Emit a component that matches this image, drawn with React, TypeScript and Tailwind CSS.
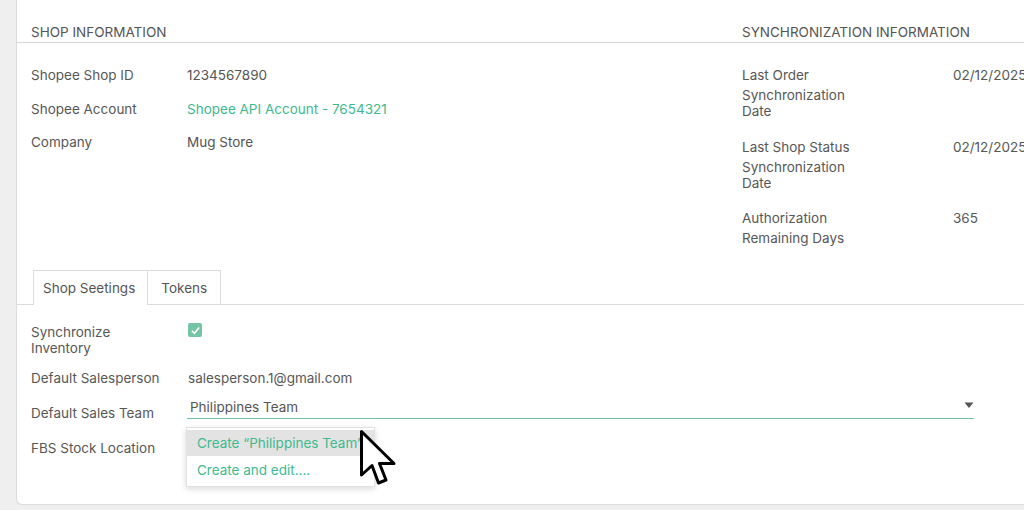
const font = { fontFamily: 'Inter, "Noto Sans", sans-serif' };

interface InfoRow {
  label: string;
  rest?: string;
  value: string;
  link?: boolean;
}

const shopRows: InfoRow[] = [
  { label: 'Shopee Shop ID', value: '1234567890' },
  { label: 'Shopee Account', value: 'Shopee API Account - 7654321', link: true },
  { label: 'Company', value: 'Mug Store' },
];

const syncRows: InfoRow[] = [
  { label: 'Last Order', rest: 'Synchronization\nDate', value: '02/12/2025 10:00:00' },
  { label: 'Last Shop Status', rest: 'Synchronization\nDate', value: '02/12/2025 10:00:00' },
  { label: 'Authorization', rest: 'Remaining Days', value: '365' },
];

function Cursor() {
  return (
    <svg
      className="absolute left-[358px] top-[429px]"
      width="38"
      height="58"
      viewBox="0 0 38 58"
    >
      <path
        d="M2.5 2.5 L2.5 46 L13 36.5 L19.5 54 L27 51 L20.5 34.5 L35 34.5 Z"
        fill="white"
        stroke="black"
        strokeWidth="3"
        strokeLinejoin="round"
      />
    </svg>
  );
}

export default function App() {
  return (
    <div className="w-[1024px] h-[510px] overflow-hidden bg-[#efefef] text-[13.5px] text-[#575757]" style={font}>
      <div className="relative ml-[16px] w-[1100px] h-[505px] bg-white border-l border-b border-[#dcdcdc] rounded-bl-[6px]">
        {/* header row */}
        <div className="flex h-[43px] border-b border-[#d6d6d6] uppercase text-[#555]">
          <div className="w-[725px] pl-[14px] flex items-end pb-0 leading-5">Shop Information</div>
          <div className="flex-1 flex items-end pb-0 leading-5">Synchronization Information</div>
        </div>

        <div className="flex h-[227px]">
          <div className="w-[725px] pl-[14px] pt-[22px]">
            {shopRows.map((row) => (
              <div key={row.label} className="flex leading-5 pb-[13.5px]">
                <div className="w-[156px]">{row.label}</div>
                <div className={row.link ? 'text-[#3dba90]' : 'text-[#555]'}>{row.value}</div>
              </div>
            ))}
          </div>
          <div className="flex-1 pt-[22px]">
            {syncRows.map((row) => (
              <div key={row.label} className="flex pb-[17.5px]">
                <div className="w-[211px]">
                  <div className="leading-5">{row.label}</div>
                  <div className="leading-4 mt-[2px] whitespace-pre-line">{row.rest}</div>
                </div>
                <div className="leading-5 whitespace-nowrap">{row.value}</div>
              </div>
            ))}
          </div>
        </div>

        {/* tabs */}
        <div className="flex h-[35px] border-b border-[#dcdcdc] pl-[16px]">
          <div className="h-[35px] pl-[9px] pr-[12px] pt-px flex items-center bg-white border border-b-0 border-[#dcdcdc] text-[#555]">
            Shop Seetings
          </div>
          <div className="h-[34px] px-[13px] pt-px flex items-center border-t border-r border-[#dcdcdc] text-[#555]">
            Tokens
          </div>
        </div>

        {/* form */}
        <div className="pl-[14px] pt-[19px]">
          <div className="flex">
            <div className="w-[157px] leading-4">
              Synchronize
              <br />
              Inventory
            </div>
            <div className="w-[14px] h-[14px] -mt-px bg-[#74c4a6] rounded-[2px] flex items-center justify-center">
              <svg width="11" height="11" viewBox="0 0 12 12">
                <path d="M2 6.3 L4.8 9 L10 2.8" fill="none" stroke="white" strokeWidth="1.8" />
              </svg>
            </div>
          </div>

          <div className="flex leading-5 mt-[12px]">
            <div className="w-[157px]">Default Salesperson</div>
            <div>salesperson.1@gmail.com</div>
          </div>

          <div className="flex mt-[9px]">
            <div className="w-[156px] mt-[6px] leading-5">Default Sales Team</div>
            <div className="relative w-[787px] h-[22px] border-b border-[#6cc4a7] flex items-start pl-[3px]">
              <span className="leading-5 text-[#555]">Philippines Team</span>
              <svg className="absolute right-[0px] top-[5px]" width="10" height="7" viewBox="0 0 10 7">
                <path d="M0.5 0.5 L9.5 0.5 L5 6 Z" fill="#555" />
              </svg>
            </div>
          </div>

          <div className="flex leading-5 mt-[15px]">
            <div className="w-[156px]">FBS Stock Location</div>
          </div>
        </div>

        {/* autocomplete dropdown */}
        <div className="absolute left-[169px] top-[427px] w-[189px] py-[2px] bg-white border border-[#e2e2e2] shadow-[0_2px_6px_rgba(0,0,0,0.15)] text-[#3dba90]">
          <div className="h-[26px] flex items-center pl-[10px] bg-[#e3e3e3] whitespace-nowrap overflow-hidden">Create “Philippines Team”</div>
          <div className="h-[28px] flex items-center pl-[10px]">Create and edit....</div>
        </div>

        <div className="absolute -left-[16px] top-0">
          <Cursor />
        </div>
      </div>
    </div>
  );
}
